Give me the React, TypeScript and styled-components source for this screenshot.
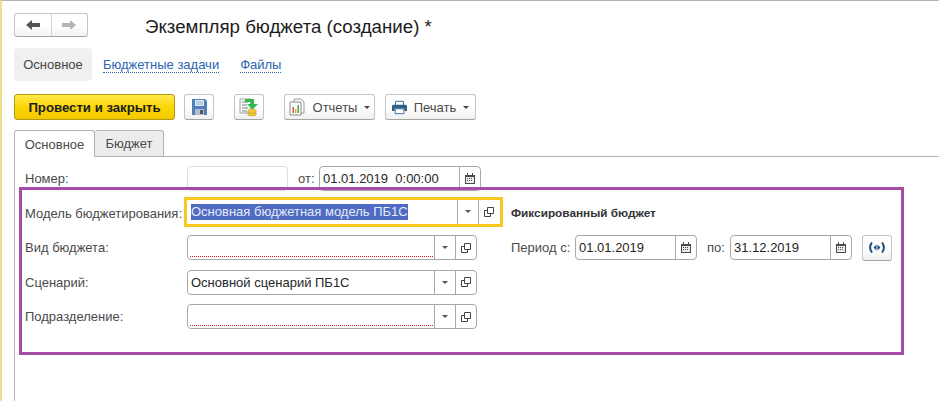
import * as React from "react";
import styled, { createGlobalStyle } from "styled-components";

const GlobalStyle = createGlobalStyle`
  html, body {
    margin: 0;
    padding: 0;
    background: #fff;
  }
  * {
    box-sizing: border-box;
  }
`;

const Page = styled.div`
  position: relative;
  width: 939px;
  height: 401px;
  overflow: hidden;
  display: flex;
  flex-direction: column;
  background: #fff;
  border-top: 1px solid #b4b4b4;
  border-left: 2px solid #f0de8c;
  font-family: "Liberation Sans", Arial, sans-serif;
  font-size: 13px;
  color: #3c3c3c;
`;

const HeadRow = styled.div`
  display: flex;
  align-items: center;
  height: 24px;
  margin: 12px 0 0 12px;
`;

const NavGroup = styled.div`
  display: flex;
  width: 74px;
  height: 24px;
  border: 1px solid #c4c4c4;
  border-bottom-color: #a4a4a4;
  border-radius: 3px;
  background: linear-gradient(#fff 50%, #f1f1f1);
`;

const NavButton = styled.div<{ $divider?: boolean }>`
  flex: 1;
  display: flex;
  align-items: center;
  justify-content: center;
  border-left: ${(p) => (p.$divider ? "1px solid #d4d4d4" : "none")};
`;

const Title = styled.h1`
  margin: 3px 0 0 57px;
  font-size: 18.7px;
  font-weight: 400;
  color: #1c1c1c;
  white-space: nowrap;
`;

const Sections = styled.div`
  display: flex;
  align-items: center;
  height: 33px;
  margin: 11px 0 0 12px;
`;

const ActiveSection = styled.div`
  display: flex;
  align-items: center;
  justify-content: center;
  width: 78px;
  height: 33px;
  border-radius: 4px;
  background: #f0f0f0;
  color: #444;
`;

const SectionLink = styled.a<{ $gap: number }>`
  margin-left: ${(p) => p.$gap}px;
  color: #2a64b0;
  border-bottom: 1px dotted #2a64b0;
  line-height: 15px;
  white-space: nowrap;
`;

const Toolbar = styled.div`
  display: flex;
  align-items: center;
  height: 26px;
  margin: 13px 0 0 12px;
`;

const PrimaryButton = styled.div`
  display: flex;
  align-items: center;
  justify-content: center;
  width: 161px;
  height: 26px;
  border: 1px solid #b39a10;
  border-radius: 3px;
  background: linear-gradient(#ffe94d, #fbd500 55%, #f1c800);
  font-size: 13.2px;
  font-weight: 700;
  color: #1c1c1c;
  white-space: nowrap;
`;

const ToolButton = styled.div<{ $gap: number; $width: number }>`
  display: flex;
  align-items: center;
  justify-content: center;
  gap: 7px;
  width: ${(p) => p.$width}px;
  height: 26px;
  margin-left: ${(p) => p.$gap}px;
  border: 1px solid #c4c4c4;
  border-bottom-color: #a4a4a4;
  border-radius: 3px;
  background: linear-gradient(#fff 50%, #f0f0f0);
  color: #4a4a4a;
  white-space: nowrap;
`;

const Caret = styled.span`
  width: 0;
  height: 0;
  margin-top: 1px;
  border-left: 3px solid transparent;
  border-right: 3px solid transparent;
  border-top: 3px solid #444;
`;

const TabBar = styled.div`
  display: flex;
  height: 27px;
  margin: 10px 0 0 12px;
`;

const Tab = styled.div<{ $active?: boolean }>`
  display: flex;
  align-items: center;
  justify-content: center;
  width: ${(p) => (p.$active ? 81 : 69)}px;
  border: 1px solid #b4b4b4;
  border-left-width: ${(p) => (p.$active ? 1 : 0)}px;
  border-bottom-width: ${(p) => (p.$active ? 0 : 1)}px;
  border-radius: 3px 3px 0 0;
  background: ${(p) => (p.$active ? "#fff" : "#ececec")};
  color: #4a4a4a;
`;

const TabRule = styled.div`
  flex: 1;
  border-bottom: 1px solid #b4b4b4;
`;

const Pane = styled.div`
  flex: 1;
  display: flex;
  flex-direction: column;
  gap: 9.5px;
  margin-left: 12px;
  padding: 9px 0 0 10px;
  border-left: 1px solid #b4b4b4;
`;

const Row = styled.div`
  display: flex;
  align-items: center;
  height: 25px;
`;

const Label = styled.div`
  width: 162px;
  color: #4a4a4a;
  white-space: nowrap;
`;

const Field = styled.div<{ $width: number; $muted?: boolean }>`
  position: relative;
  display: flex;
  align-items: center;
  width: ${(p) => p.$width}px;
  height: 25px;
  border: 1px solid ${(p) => (p.$muted ? "#dcdcdc" : "#a8a8a8")};
  border-radius: 4px;
  background: #fff;
`;

const Value = styled.div`
  flex: 1;
  min-width: 0;
  padding-left: 3px;
  color: #262626;
  white-space: pre;
`;

const Required = styled.div`
  position: absolute;
  left: 2px;
  bottom: 2px;
  width: 244px;
  height: 1px;
  background: repeating-linear-gradient(90deg, #e81414 0 1px, transparent 1px 2px);
`;

const FieldButton = styled.div`
  display: flex;
  align-items: center;
  justify-content: center;
  flex: none;
  width: 21px;
  height: 100%;
  border-left: 1px solid #a8a8a8;
`;

const HighlightFrame = styled.div`
  display: flex;
  align-items: center;
  width: 319px;
  height: 30px;
  margin: -3px 0 0 -3px;
  padding: 0 1px 0 4px;
  border: 3px solid #f9c81e;
  background: #fff;
`;

const Selected = styled.span`
  flex: 1;
  min-width: 0;
  white-space: nowrap;
  color: #e4e9f8;
  & > span {
    display: inline-block;
    height: 16px;
    line-height: 16px;
    background: #4f6cc2;
  }
`;

const FramedButton = styled(FieldButton)`
  height: 24px;
`;

const Caption = styled.div<{ $gap: number; $width?: number }>`
  width: ${(p) => (p.$width ? `${p.$width}px` : "auto")};
  margin-left: ${(p) => p.$gap}px;
  color: #4a4a4a;
  white-space: nowrap;
`;

const StrongCaption = styled.div`
  margin: -1px 0 0 8px;
  font-size: 11.8px;
  font-weight: 700;
  color: #333;
  white-space: nowrap;
`;

const PeriodButton = styled.div`
  display: flex;
  align-items: center;
  justify-content: center;
  width: 30px;
  height: 26px;
  margin-left: 10px;
  border: 1px solid #c4c4c4;
  border-bottom-color: #a4a4a4;
  border-radius: 3px;
  background: linear-gradient(#fff 50%, #f0f0f0);
`;

const Annotation = styled.div`
  position: absolute;
  left: 17px;
  top: 186px;
  width: 885px;
  height: 168px;
  border: 3px solid #a64ca6;
  pointer-events: none;
`;

const ArrowLeft = ({ color }: { color: string }) => (
  <svg width="14" height="12" viewBox="0 0 14 12">
    <path d="M0 6 6 1v3h8v4H6v3z" fill={color} />
  </svg>
);

const ArrowRight = ({ color }: { color: string }) => (
  <svg width="14" height="12" viewBox="0 0 14 12">
    <path d="M14 6 8 1v3H0v4h8v3z" fill={color} />
  </svg>
);

const SaveIcon = () => (
  <svg width="15" height="16" viewBox="0 0 15 16">
    <path d="M0 0h13l2 2v14H0z" fill="#4f7fb4" />
    <path d="M3 1h9v6H3z" fill="#dfe9f4" />
    <path d="M4 3h7M4 5h7" stroke="#8fb0d0" />
    <path d="M3 10h9v6H3z" fill="#b4bcc6" />
    <path d="M8 11h3v4H8z" fill="#4c5c70" />
  </svg>
);

const PostIcon = () => (
  <svg width="20" height="19" viewBox="0 0 20 19">
    <path d="M1 1h11v14H1z" fill="#f6f6f6" stroke="#a0a0a0" />
    <path d="M3 4h6M3 7h5M3 10h6M3 13h5" stroke="#7c8a7c" />
    <ellipse cx="13" cy="12.500" rx="4" ry="1.600" fill="#f4d44a" stroke="#b8962a" strokeWidth=".6" />
    <path d="M9 12.500v4.500c0 1 8 1 8 0v-4.500" fill="#f0c93a" stroke="#b8962a" strokeWidth=".6" />
    <path d="M9 15h8" stroke="#b8962a" strokeWidth=".6" />
    <path d="M6 1h9v5h4l-5.500 5.500L8 6h3.500V4H6z" fill="#2fb84c" />
  </svg>
);

const ReportIcon = () => (
  <svg width="17" height="18" viewBox="0 0 17 18">
    <path d="M5 1h7l3 3v11H5z" fill="#fff" stroke="#9a9a9a" />
    <path d="M1 4h11v13H1z" fill="#fbfbfb" stroke="#8c8c8c" />
    <path d="M3.500 9h1.500v6H3.500z" fill="#d9534f" />
    <path d="M6 11h1.500v4H6z" fill="#e0a030" />
    <path d="M8.500 7h1.500v8H8.500z" fill="#4aa84a" />
  </svg>
);

const PrintIcon = () => (
  <svg width="15" height="15" viewBox="0 0 17 16">
    <path d="M4 1h9v5H4z" fill="#fff" stroke="#2f5f8a" />
    <path d="M0 6.500C0 5.500 1 5 2 5h13c1 0 2 .5 2 1.500V12h-3V9H3v3H0z" fill="#2f5f8a" />
    <path d="M3.500 9.500h10V15h-10z" fill="#fff" stroke="#2f5f8a" />
  </svg>
);

const DropIcon = () => (
  <svg width="6" height="3" viewBox="0 0 6 3">
    <path d="M0 0h6L3 3z" fill="#555" />
  </svg>
);

const OpenIcon = () => (
  <svg width="10" height="10" viewBox="0 0 10 10" fill="none" stroke="#444">
    <path d="M3.500.5h6v6h-6z" />
    <path d="M3 3.500H.5v6h6V7" />
  </svg>
);

const CalendarIcon = () => (
  <svg width="10" height="11" viewBox="0 0 10 11">
    <path d="M0 2h10v9H0z" fill="#4a4a4a" />
    <path d="M2 0h1v3H2zM7 0h1v3H7z" fill="#4a4a4a" />
    <path d="M1 4h8v6H1z" fill="#ececec" />
    <path d="M2 5h1v1H2zM4 5h1v1H4zM6 5h1v1H6zM2 7h1v1H2zM4 7h1v1H4zM6 7h1v1H6z" fill="#4a4a4a" />
  </svg>
);

const PeriodIcon = () => (
  <svg width="16" height="11" viewBox="0 0 16 11" fill="none">
    <path d="M3 .5C.7 3.500.7 7.500 3 10.500M13 .5c2.300 3 2.300 7 0 10" stroke="#1d4f7c" strokeWidth="2" />
    <path d="M7.500 2.500v6L4.500 5.500zM8.500 2.500v6l3-3z" fill="#1d4f7c" />
  </svg>
);

const LookupButtons = () => (
  <>
    <FieldButton>
      <DropIcon />
    </FieldButton>
    <FieldButton>
      <OpenIcon />
    </FieldButton>
  </>
);

const DateField = ({ value, width }: { value: string; width: number }) => (
  <Field $width={width}>
    <Value>{value}</Value>
    <FieldButton>
      <CalendarIcon />
    </FieldButton>
  </Field>
);

const App = () => (
  <Page>
    <GlobalStyle />
    <HeadRow>
      <NavGroup>
        <NavButton>
          <ArrowLeft color="#555" />
        </NavButton>
        <NavButton $divider>
          <ArrowRight color="#b4b4b4" />
        </NavButton>
      </NavGroup>
      <Title>Экземпляр бюджета (создание) *</Title>
    </HeadRow>

    <Sections>
      <ActiveSection>Основное</ActiveSection>
      <SectionLink $gap={11}>Бюджетные задачи</SectionLink>
      <SectionLink $gap={21}>Файлы</SectionLink>
    </Sections>

    <Toolbar>
      <PrimaryButton>Провести и закрыть</PrimaryButton>
      <ToolButton $gap={9} $width={30}>
        <SaveIcon />
      </ToolButton>
      <ToolButton $gap={20} $width={30}>
        <PostIcon />
      </ToolButton>
      <ToolButton $gap={20} $width={91}>
        <ReportIcon />
        Отчеты
        <Caret />
      </ToolButton>
      <ToolButton $gap={10} $width={91}>
        <PrintIcon />
        Печать
        <Caret />
      </ToolButton>
    </Toolbar>

    <TabBar>
      <Tab $active>Основное</Tab>
      <Tab>Бюджет</Tab>
      <TabRule />
    </TabBar>

    <Pane>
      <Row>
        <Label>Номер:</Label>
        <Field $width={101} $muted />
        <Caption $gap={10} $width={21}>
          от:
        </Caption>
        <DateField value="01.01.2019  0:00:00" width={162} />
      </Row>
      <Row>
        <Label>Модель бюджетирования:</Label>
        <HighlightFrame>
          <Selected>
            <span>Основная бюджетная модель ПБ1С</span>
          </Selected>
          <FramedButton>
            <DropIcon />
          </FramedButton>
          <FramedButton>
            <OpenIcon />
          </FramedButton>
        </HighlightFrame>
        <StrongCaption>Фиксированный бюджет</StrongCaption>
      </Row>
      <Row>
        <Label>Вид бюджета:</Label>
        <Field $width={290}>
          <Value />
          <Required />
          <LookupButtons />
        </Field>
        <Caption $gap={34} $width={64}>
          Период с:
        </Caption>
        <DateField value="01.01.2019" width={122} />
        <Caption $gap={10} $width={23}>
          по:
        </Caption>
        <DateField value="31.12.2019" width={122} />
        <PeriodButton>
          <PeriodIcon />
        </PeriodButton>
      </Row>
      <Row>
        <Label>Сценарий:</Label>
        <Field $width={290}>
          <Value>Основной сценарий ПБ1С</Value>
          <LookupButtons />
        </Field>
      </Row>
      <Row>
        <Label>Подразделение:</Label>
        <Field $width={290}>
          <Value />
          <Required />
          <LookupButtons />
        </Field>
      </Row>
    </Pane>

    <Annotation />
  </Page>
);

export default App;
